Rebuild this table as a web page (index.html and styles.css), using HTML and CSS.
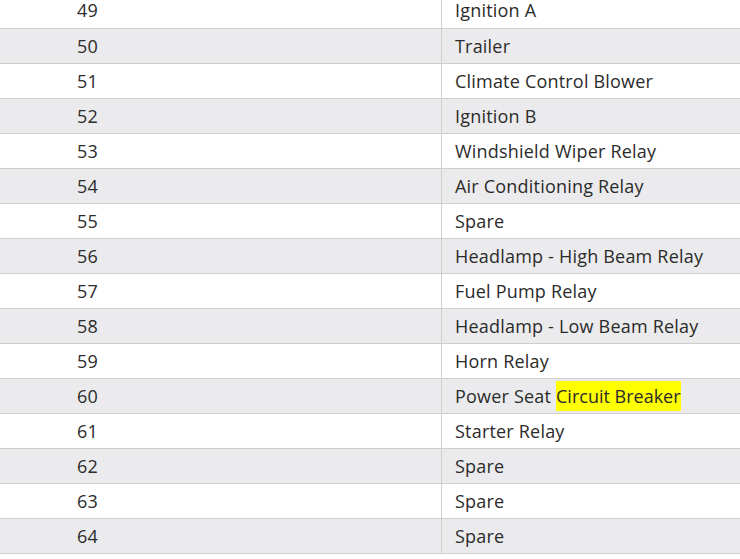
FILE: index.html
```html
<!DOCTYPE html>
<html>
<head>
<meta charset="utf-8">
<link rel="stylesheet" href="styles.css">
</head>
<body>
<table class="fuse-table">
<tbody>
<tr><td class="num">49</td><td class="desc">Ignition A</td></tr>
<tr><td class="num">50</td><td class="desc">Trailer</td></tr>
<tr><td class="num">51</td><td class="desc">Climate Control Blower</td></tr>
<tr><td class="num">52</td><td class="desc">Ignition B</td></tr>
<tr><td class="num">53</td><td class="desc">Windshield Wiper Relay</td></tr>
<tr><td class="num">54</td><td class="desc">Air Conditioning Relay</td></tr>
<tr><td class="num">55</td><td class="desc">Spare</td></tr>
<tr><td class="num">56</td><td class="desc">Headlamp - High Beam Relay</td></tr>
<tr><td class="num">57</td><td class="desc">Fuel Pump Relay</td></tr>
<tr><td class="num">58</td><td class="desc">Headlamp - Low Beam Relay</td></tr>
<tr><td class="num">59</td><td class="desc">Horn Relay</td></tr>
<tr><td class="num">60</td><td class="desc">Power Seat <mark class="hl">Circuit Breaker</mark></td></tr>
<tr><td class="num">61</td><td class="desc">Starter Relay</td></tr>
<tr><td class="num">62</td><td class="desc">Spare</td></tr>
<tr><td class="num">63</td><td class="desc">Spare</td></tr>
<tr><td class="num">64</td><td class="desc">Spare</td></tr>
</tbody>
</table>
</body>
</html>
```
FILE: styles.css
```css
html, body {
  margin: 0;
  padding: 0;
  background: #ffffff;
}
body {
  font-family: "Open Sans", "DejaVu Sans", sans-serif;
  font-size: 18px;
  letter-spacing: 0.2px;
  color: #2b2b2b;
}
.fuse-table {
  border-collapse: collapse;
  width: 760px;
  margin-top: -7px;
}
.fuse-table tr {
  height: 35px;
  border-bottom: 1px solid #cfcfcf;
}
.fuse-table tr:nth-child(even) {
  background: #ebebed;
}
.fuse-table td {
  padding: 0;
  height: 34px;
  vertical-align: middle;
  line-height: 20px;
}
.num {
  width: 364px;
  padding-left: 77px !important;
  border-right: 1px solid #cfcfcf;
}
.desc {
  padding-left: 13px !important;
}
.hl {
  background: #ffff00;
  color: #2b2b2b;
  padding: 3px 0;
  letter-spacing: 0;
}
```
